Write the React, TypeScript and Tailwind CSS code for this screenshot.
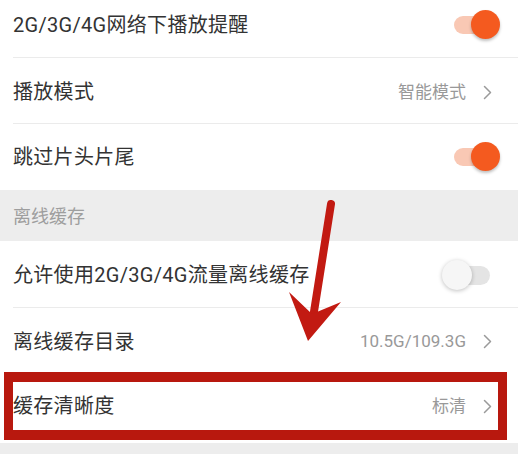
import React from "react";

const font = { fontFamily: 'Roboto, "Noto Sans CJK SC", sans-serif' };

function Chevron() {
  return (
    <svg width="9" height="15" viewBox="0 0 9 15" className="ml-[17px]">
      <polyline points="1.5,1.5 7.5,7.5 1.5,13.5" fill="none" stroke="#9a9a9a" strokeWidth="1.5" strokeLinecap="round" strokeLinejoin="round" />
    </svg>
  );
}

function ToggleOn() {
  return (
    <div className="relative w-[46px] h-[30px]">
      <div className="absolute left-0 top-[6px] w-[36px] h-[18px] rounded-full bg-[#f9c8b4]" />
      <div className="absolute right-0 top-[0px] w-[29px] h-[29px] rounded-full bg-[#f45a1f] shadow-[0_2px_3px_rgba(0,0,0,0.25)]" />
    </div>
  );
}

function ToggleOff() {
  return (
    <div className="relative w-[48px] h-[30px]">
      <div className="absolute right-0 top-[6px] w-[44px] h-[19px] rounded-full bg-[#e4e4e4]" />
      <div className="absolute left-0 top-0 w-[30px] h-[30px] rounded-full bg-[#f6f6f6] shadow-[0_1px_4px_rgba(0,0,0,0.25)]" />
    </div>
  );
}

function Divider() {
  return <div className="h-px bg-[#ebebeb] ml-[13px]" />;
}

export default function App() {
  return (
    <div className="relative w-[518px] h-[454px] bg-white overflow-hidden" style={font}>
      <div className="flex flex-col">
        <div className="h-[57px] flex items-center justify-between pl-[13px] pr-[18px] pb-[7px]">
          <span className="text-[20px] text-[#333333] leading-none tracking-[0.3px]">2G/3G/4G网络下播放提醒</span>
          <ToggleOn />
        </div>
        <Divider />
        <div className="h-[65px] flex items-center justify-between pl-[13px] pr-[26px] pt-[3px]">
          <span className="text-[20px] text-[#333333] leading-none tracking-[0.3px]">播放模式</span>
          <div className="flex items-center">
            <span className="text-[17px] text-[#999999] leading-none">智能模式</span>
            <Chevron />
          </div>
        </div>
        <Divider />
        <div className="h-[66px] flex items-center justify-between pl-[13px] pr-[18px]">
          <span className="text-[20px] text-[#333333] leading-none tracking-[0.3px]">跳过片头片尾</span>
          <ToggleOn />
        </div>
        <div className="h-[51px] bg-[#ededed] flex items-center pl-[13px] pt-[3px]">
          <span className="text-[18px] text-[#9e9e9e] leading-none">离线缓存</span>
        </div>
        <div className="h-[66px] flex items-center justify-between pl-[13px] pr-[28px] pt-[1px]">
          <span className="text-[20px] text-[#333333] leading-none tracking-[0.3px]">允许使用2G/3G/4G流量离线缓存</span>
          <ToggleOff />
        </div>
        <Divider />
        <div className="h-[65px] flex items-center justify-between pl-[13px] pr-[26px] pt-[2px]">
          <span className="text-[20px] text-[#333333] leading-none tracking-[0.3px]">离线缓存目录</span>
          <div className="flex items-center">
            <span className="text-[17px] text-[#999999] leading-none">10.5G/109.3G</span>
            <Chevron />
          </div>
        </div>
        <div className="h-[70px] flex items-center justify-between pl-[13px] pr-[26px] pb-[4px]">
          <span className="text-[20px] text-[#333333] leading-none tracking-[0.3px]">缓存清晰度</span>
          <div className="flex items-center">
            <span className="text-[17px] text-[#999999] leading-none">标清</span>
            <Chevron />
          </div>
        </div>
        <div className="h-[20px] bg-[#ededed]" />
      </div>

      <div className="absolute left-[4px] top-[372px] w-[503px] h-[68px] border-[9px] border-t-[10px] border-b-[10px] border-[#b8180e] pointer-events-none" />

      <svg className="absolute left-0 top-0 pointer-events-none" width="518" height="454" viewBox="0 0 518 454">
        <line x1="331" y1="204" x2="313" y2="318" stroke="#c21a12" strokeWidth="8" strokeLinecap="round" />
        <polygon points="308,341 289,292 312,314 341,302" fill="#c21a12" />
      </svg>
    </div>
  );
}
